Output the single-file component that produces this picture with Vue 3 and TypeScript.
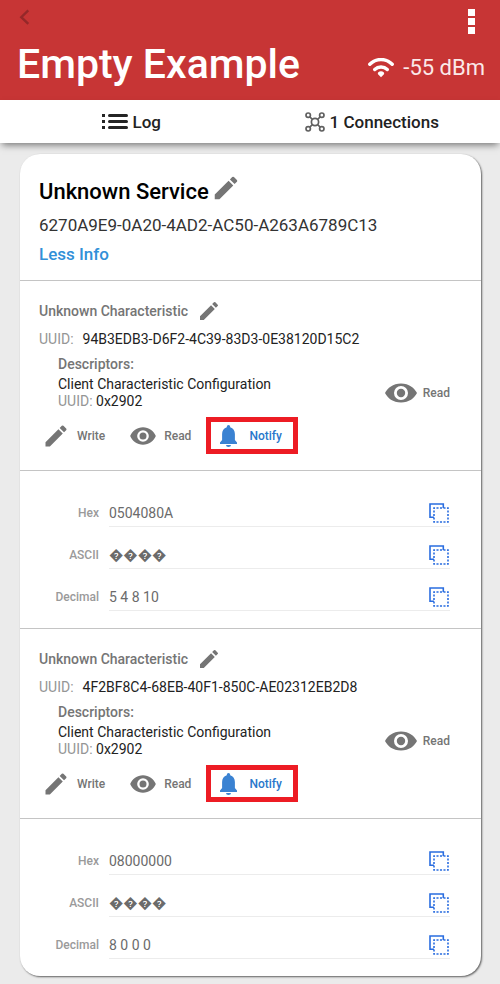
<script setup lang="ts">
interface Field {
  label: string
  value: string
}

interface Characteristic {
  id: string
  name: string
  uuid: string
  descriptor: { name: string; uuid: string }
  fields: Field[]
}

const service = {
  name: 'Unknown Service',
  uuid: '6270A9E9-0A20-4AD2-AC50-A263A6789C13',
}

const characteristics: Characteristic[] = [
  {
    id: 'c1',
    name: 'Unknown Characteristic',
    uuid: '94B3EDB3-D6F2-4C39-83D3-0E38120D15C2',
    descriptor: { name: 'Client Characteristic Configuration', uuid: '0x2902' },
    fields: [
      { label: 'Hex', value: '0504080A' },
      { label: 'ASCII', value: '\uFFFD\uFFFD\uFFFD\uFFFD' },
      { label: 'Decimal', value: '5 4 8 10' },
    ],
  },
  {
    id: 'c2',
    name: 'Unknown Characteristic',
    uuid: '4F2BF8C4-68EB-40F1-850C-AE02312EB2D8',
    descriptor: { name: 'Client Characteristic Configuration', uuid: '0x2902' },
    fields: [
      { label: 'Hex', value: '08000000' },
      { label: 'ASCII', value: '\uFFFD\uFFFD\uFFFD\uFFFD' },
      { label: 'Decimal', value: '8 0 0 0' },
    ],
  },
]

const pencil =
  'M3 17.25V21h3.75L17.81 9.94l-3.75-3.75L3 17.25zM20.71 7.04a1 1 0 0 0 0-1.41l-2.34-2.34a1 1 0 0 0-1.41 0l-1.83 1.83 3.75 3.75 1.83-1.83z'
const eye =
  'M12 4.5C7 4.5 2.73 7.61 1 12c1.73 4.39 6 7.5 11 7.5s9.27-3.11 11-7.5c-1.73-4.39-6-7.5-11-7.5zM12 17a5 5 0 1 1 0-10 5 5 0 0 1 0 10zm0-8a3 3 0 1 0 0 6 3 3 0 0 0 0-6z'
</script>

<template>
  <div class="screen">
    <header class="header">
      <div class="toolbar">
        <button class="icon-button" aria-label="Back">
          <svg width="12" height="16" viewBox="0 0 12 16">
            <path d="M10.300 1.400 3.300 8.200l7 6.600" fill="none" stroke="#952829" stroke-width="2.400" />
          </svg>
        </button>
        <button class="icon-button" aria-label="More options">
          <svg width="7" height="25" viewBox="0 0 7 25" fill="#fff">
            <path d="M0 0h7v7H0zM0 9h7v7H0zM0 18h7v7H0z" />
          </svg>
        </button>
      </div>
      <div class="heading">
        <h1>Empty Example</h1>
        <div class="signal">
          <svg width="26" height="20" viewBox="0 0 26 20">
            <g fill="none" stroke="#fff" stroke-width="3.400" stroke-linecap="round">
              <path d="M1.800 6.300C8-.1 18-.1 24.200 6.300" />
              <path d="M6.700 11.500c3.500-3.400 9.100-3.400 12.600 0" />
            </g>
            <path d="M13 19.200l-2.700-2.700a1.600 1.600 0 0 1 0-2.200c1.500-1.300 3.900-1.300 5.400 0a1.600 1.600 0 0 1 0 2.200z" fill="#fff" />
          </svg>
          <span>-55 dBm</span>
        </div>
      </div>
    </header>

    <nav class="tabs">
      <a href="#log">
        <svg width="26" height="16" viewBox="0 0 26 16" fill="#242424">
          <path d="M0 0h3v3H0zM0 6h3v3H0zM0 12h3v3H0z" />
          <rect x="6" y="0" width="20" height="3" rx="1.5" />
          <rect x="6" y="6" width="20" height="3" rx="1.5" />
          <rect x="6" y="12" width="20" height="3" rx="1.5" />
        </svg>
        Log
      </a>
      <a href="#connections">
        <svg width="20" height="20" viewBox="0 0 20 20" fill="none" stroke="#606060" stroke-width="1.700">
          <circle cx="10" cy="10" r="3.600" />
          <circle cx="3.200" cy="3.200" r="2.200" />
          <circle cx="16.800" cy="3.200" r="2.200" />
          <circle cx="3.200" cy="16.800" r="2.200" />
          <circle cx="16.800" cy="16.800" r="2.200" />
          <path d="M4.800 4.800l2.700 2.700M15.200 4.800l-2.700 2.700M4.800 15.200l2.700-2.700M15.200 15.200l-2.700-2.700" />
        </svg>
        1 Connections
      </a>
    </nav>

    <main class="card">
      <section class="service">
        <div class="service-title">
          <h2>{{ service.name }}</h2>
          <button class="icon-button edit-large" aria-label="Rename service">
            <svg width="30" height="30" viewBox="0 0 24 24" fill="#757575"><path :d="pencil" /></svg>
          </button>
        </div>
        <p class="service-uuid">{{ service.uuid }}</p>
        <a class="less" href="#info">Less Info</a>
      </section>

      <template v-for="c in characteristics" :key="c.id">
        <section class="characteristic">
          <div class="char-title">
            <h3>{{ c.name }}</h3>
            <button class="icon-button" aria-label="Rename characteristic">
              <svg width="24" height="24" viewBox="0 0 24 24" fill="#757575"><path :d="pencil" /></svg>
            </button>
          </div>
          <p class="char-uuid"><span class="muted">UUID:</span>{{ c.uuid }}</p>
          <div class="descriptors">
            <h4>Descriptors:</h4>
            <div class="descriptor">
              <div>
                <p>{{ c.descriptor.name }}</p>
                <p><span class="muted">UUID:</span> {{ c.descriptor.uuid }}</p>
              </div>
              <button class="action read-descriptor">
                <svg width="32" height="20" viewBox="0 0 32 20" fill="#757575">
                  <path
                    fill-rule="evenodd"
                    d="M16 .5C8 .5 2.500 5 0 10c2.500 5 8 9.500 16 9.500S29.500 15 32 10C29.500 5 24 .5 16 .5zM16 17a7 7 0 1 1 0-14 7 7 0 0 1 0 14zm0-11.200a4.200 4.200 0 1 0 0 8.400 4.200 4.200 0 0 0 0-8.400z"
                  />
                </svg>
                Read
              </button>
            </div>
          </div>
          <div class="actions">
            <button class="action write">
              <svg width="28" height="28" viewBox="0 0 24 24" fill="#757575"><path :d="pencil" /></svg>
              Write
            </button>
            <button class="action read">
              <svg width="28" height="30" viewBox="0 0 24 24" fill="#757575"><path :d="eye" /></svg>
              Read
            </button>
            <button class="action notify">
              <svg width="19" height="22" viewBox="0 0 18 22" fill="#3a82d2">
                <path
                  d="M9 0a1.700 1.700 0 0 0-1.700 1.700v.5C4.200 3 2.600 5.800 2.600 9v6L.5 17.500V19h17v-1.500L15.400 15V9c0-3.200-1.600-6-4.700-6.800v-.5A1.700 1.700 0 0 0 9 0zM6.500 20a2.500 2 0 0 0 5 0z"
                />
              </svg>
              Notify
            </button>
          </div>
        </section>

        <section class="values">
          <div v-for="f in c.fields" :key="f.label" class="value-row">
            <label :for="`${c.id}-${f.label}`">{{ f.label }}</label>
            <div class="field">
              <input :id="`${c.id}-${f.label}`" :value="f.value" type="text" readonly />
              <button class="icon-button" :aria-label="`Copy ${f.label}`">
                <svg width="20" height="20" viewBox="0 0 20 20" fill="none" stroke="#2a6de0" stroke-width="1.600">
                  <path d="M5 14.300H1V1h13.300v4" />
                  <path d="M5 5h14v14H5z" stroke-dasharray="2.100 1.400" stroke-dashoffset="1.050" />
                </svg>
              </button>
            </div>
          </div>
        </section>
      </template>
    </main>
  </div>
</template>

<style>
body {
  background: #ebebeb;
}
</style>

<style scoped>
.screen {
  font-family: Roboto, 'DejaVu Sans', sans-serif;
  color: #222;
}

h1,
h2,
h3,
h4,
p {
  margin: 0;
  font-weight: 500;
}

p {
  font-weight: 400;
}

svg {
  display: block;
  flex: none;
}

button {
  display: flex;
  align-items: center;
  padding: 0;
  border: 0;
  background: none;
  font-family: inherit;
}

a {
  text-decoration: none;
}

.header {
  background: #c73535;
  color: #fff;
}

.toolbar {
  display: flex;
  justify-content: space-between;
  align-items: flex-start;
  height: 36px;
  padding: 9px 25px 0 18px;
  box-sizing: border-box;
}

.heading {
  display: flex;
  justify-content: space-between;
  align-items: center;
  height: 64px;
  padding: 0 15px 8px 17px;
  box-sizing: border-box;
}

h1 {
  font-size: 41px;
  line-height: 56px;
}

.signal {
  display: flex;
  align-items: center;
  gap: 9px;
  padding-top: 8px;
  font-size: 22px;
  line-height: 28px;
}

.signal span {
  color: #fbe9e9;
}

.tabs {
  display: grid;
  grid-template-columns: 1fr 1fr;
  height: 43px;
  padding: 0 8px 0 11px;
  background: #fff;
  box-shadow: 0 4px 7px -2px rgba(0, 0, 0, 0.5);
}

.tabs a {
  display: flex;
  justify-content: center;
  align-items: center;
  gap: 5px;
  color: #222;
  font-size: 17px;
  font-weight: 500;
}

.card {
  margin: 11px 19px 7px 20px;
  border-radius: 20px;
  background: #fff;
  box-shadow: 1px 1px 2px rgba(0, 0, 0, 0.6);
}

.card > section:not(:last-child) {
  border-bottom: 1px solid #c4c4c4;
}

.service {
  padding: 22px 19px 14px;
}

.service-title {
  display: flex;
  align-items: center;
  gap: 2px;
  height: 32px;
}

h2 {
  color: #000;
  font-size: 22px;
  line-height: 32px;
}

.edit-large {
  padding-bottom: 8px;
}

.service-uuid {
  font-size: 17px;
  line-height: 34px;
  color: #333;
}

.less {
  display: block;
  color: #3190d8;
  font-size: 17px;
  font-weight: 500;
  line-height: 24px;
}

.characteristic {
  padding: 16px 31px 16px 19px;
}

.char-title {
  display: flex;
  align-items: center;
  gap: 9px;
  height: 28px;
}

h3,
h4 {
  color: #757575;
  font-size: 14px;
}

h4 {
  line-height: 22px;
}

.char-uuid {
  display: flex;
  gap: 9px;
  font-size: 14px;
  line-height: 28px;
}

.muted {
  color: #959595;
}

.descriptors {
  padding-left: 19px;
}

.descriptor {
  display: flex;
  justify-content: space-between;
  align-items: center;
  font-size: 14px;
  line-height: 17px;
  height: 35px;
}

.action {
  color: #757575;
  font-size: 12px;
  font-weight: 500;
}

.read-descriptor {
  gap: 6px;
}

.actions {
  display: flex;
  margin-top: 7px;
  padding-left: 3px;
}

.write {
  gap: 7px;
}

.read {
  gap: 7px;
  margin-left: 24px;
}

.notify {
  gap: 11px;
  height: 37px;
  margin-left: 15px;
  padding: 0 11px 0 8px;
  border: 5px solid #ed1c24;
  color: #2977cb;
}

.values {
  padding: 14px 31px 17px 0;
}

.value-row {
  display: grid;
  grid-template-columns: 79px 1fr;
  gap: 10px;
  align-items: end;
  height: 42px;
}

label {
  color: #9a9a9a;
  font-size: 12px;
  font-weight: 500;
  line-height: 28px;
  text-align: right;
}

.field {
  display: flex;
  align-items: center;
  height: 28px;
  padding-right: 1px;
  box-sizing: border-box;
  border-bottom: 1px solid #ececec;
}

input {
  flex: 1;
  min-width: 0;
  padding: 0;
  border: 0;
  outline: 0;
  background: none;
  color: #6b6b6b;
  font-family: inherit;
  font-size: 14px;
}
</style>
